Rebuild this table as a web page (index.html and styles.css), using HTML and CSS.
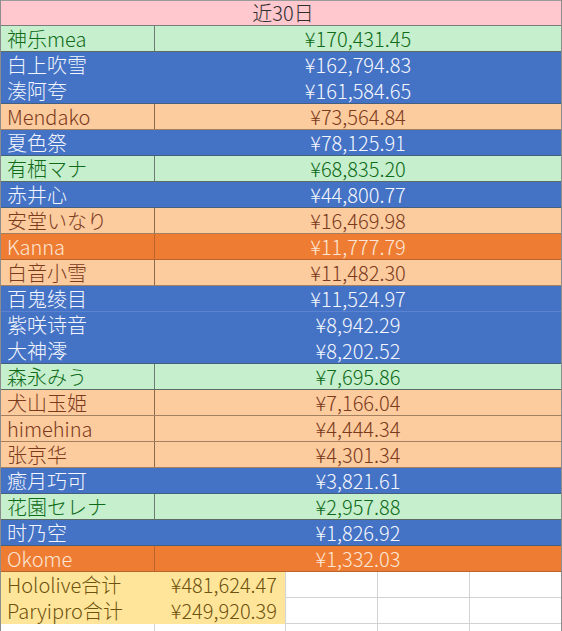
FILE: index.html
```html
<!DOCTYPE html>
<html lang="zh">
<head>
<meta charset="utf-8">
<title>近30日</title>
<link rel="stylesheet" href="styles.css">
</head>
<body>
<div class="sheet">
  <div class="head">近30日</div>
  <div class="row green"><div class="name">神乐mea</div><div class="val">¥170,431.45</div></div>
  <div class="row blue"><div class="name">白上吹雪</div><div class="val">¥162,794.83</div></div>
  <div class="row blue"><div class="name">湊阿夸</div><div class="val">¥161,584.65</div></div>
  <div class="row peach"><div class="name">Mendako</div><div class="val">¥73,564.84</div></div>
  <div class="row blue"><div class="name">夏色祭</div><div class="val">¥78,125.91</div></div>
  <div class="row green"><div class="name">有栖マナ</div><div class="val">¥68,835.20</div></div>
  <div class="row blue"><div class="name">赤井心</div><div class="val">¥44,800.77</div></div>
  <div class="row peach"><div class="name">安堂いなり</div><div class="val">¥16,469.98</div></div>
  <div class="row orange"><div class="name">Kanna</div><div class="val">¥11,777.79</div></div>
  <div class="row peach"><div class="name">白音小雪</div><div class="val">¥11,482.30</div></div>
  <div class="row blue faint"><div class="name">百鬼绫目</div><div class="val">¥11,524.97</div></div>
  <div class="row blue"><div class="name">紫咲诗音</div><div class="val">¥8,942.29</div></div>
  <div class="row blue"><div class="name">大神澪</div><div class="val">¥8,202.52</div></div>
  <div class="row green"><div class="name">森永みう</div><div class="val">¥7,695.86</div></div>
  <div class="row peach"><div class="name">犬山玉姫</div><div class="val">¥7,166.04</div></div>
  <div class="row peach"><div class="name">himehina</div><div class="val">¥4,444.34</div></div>
  <div class="row peach"><div class="name">张京华</div><div class="val">¥4,301.34</div></div>
  <div class="row blue"><div class="name">癒月巧可</div><div class="val">¥3,821.61</div></div>
  <div class="row green"><div class="name">花園セレナ</div><div class="val">¥2,957.88</div></div>
  <div class="row blue"><div class="name">时乃空</div><div class="val">¥1,826.92</div></div>
  <div class="row orange"><div class="name">Okome</div><div class="val">¥1,332.03</div></div>
  <div class="totals">
    <div class="total-block">
      <div class="total-line"><span>Hololive合计</span><span>¥481,624.47</span></div>
      <div class="total-line"><span>Paryipro合计</span><span>¥249,920.39</span></div>
    </div>
    <div class="empty-grid">
      <div class="cell"></div><div class="cell"></div><div class="cell"></div>
      <div class="cell"></div><div class="cell"></div><div class="cell"></div>
    </div>
  </div>
  <div class="filler">
    <div class="cell w1"></div><div class="cell w2"></div><div class="cell"></div><div class="cell"></div><div class="cell"></div>
  </div>
</div>
</body>
</html>
```
FILE: styles.css
```css
* { box-sizing: border-box; }
html, body { margin: 0; padding: 0; background: #fff; }
body {
  font-family: "Noto Sans CJK SC", "Noto Sans", sans-serif;
  font-size: 20px;
  font-weight: 300;
}
.sheet {
  width: 562px;
  height: 631px;
  overflow: hidden;
  border-left: 1px solid #8d8d8d;
  border-right: 1px solid #8d8d8d;
}
.head {
  height: 26px;
  line-height: 24px;
  background: #ffc7ce;
  color: #2e2e2e;
  text-align: center;
  border-top: 1px solid #9a9a9a;
  border-bottom: 1px solid #7d7d7d;
  padding-left: 4px;
}
.row {
  display: grid;
  grid-template-columns: 154px 1fr;
  height: 26px;
  line-height: 25px;
  border-bottom: 1px solid #6f7a88;
}
.name { padding-left: 6px; white-space: nowrap; }
.val { text-align: center; padding-left: 0; }
.green { background: #c6efce; color: #0f6b18; border-bottom-color: #5c6b63; }
.green .name { border-right: 1px solid #6d7c70; }
.blue { background: #4472c4; color: #f4f7ff; border-bottom-color: #4472c4; }
.peach { background: #fccb9e; color: #7b3a1c; border-bottom-color: #a3805f; }
.peach .name { border-right: 1px solid #8a6a4d; }
.orange { background: #ee7d33; color: #fde6d6; border-bottom-color: #b8642c; }
.orange .name { border-right: 1px solid #b9652d; }
.faint { border-bottom-color: #5c83cf; }
.row.blue:has(+ .green), .row.blue:has(+ .peach), .row.blue:has(+ .orange) {
  border-bottom-color: #45607e;
}
.row.orange:last-of-type { border-bottom: 0; }
.totals {
  display: grid;
  grid-template-columns: 284px 1fr;
  height: 52px;
}
.total-block {
  background: #ffe599;
  color: #6e5210;
}
.total-line {
  display: flex;
  justify-content: space-between;
  height: 26px;
  line-height: 26px;
  padding: 0 8px 0 6px;
  white-space: nowrap;
}
.empty-grid {
  display: grid;
  grid-template-columns: 92px 92px 92px;
  grid-auto-rows: 26px;
}
.cell {
  border-left: 1px solid #d2d2d2;
  border-bottom: 1px solid #d2d2d2;
}
.filler {
  display: grid;
  grid-template-columns: 154px 130px 92px 92px 92px;
  height: 7px;
}
.filler .w1 { border-left: 0; border-right: 1px solid #d2d2d2; }
.filler .w2 { border-left: 0; }
.filler .cell { border-bottom: 0; }
```
